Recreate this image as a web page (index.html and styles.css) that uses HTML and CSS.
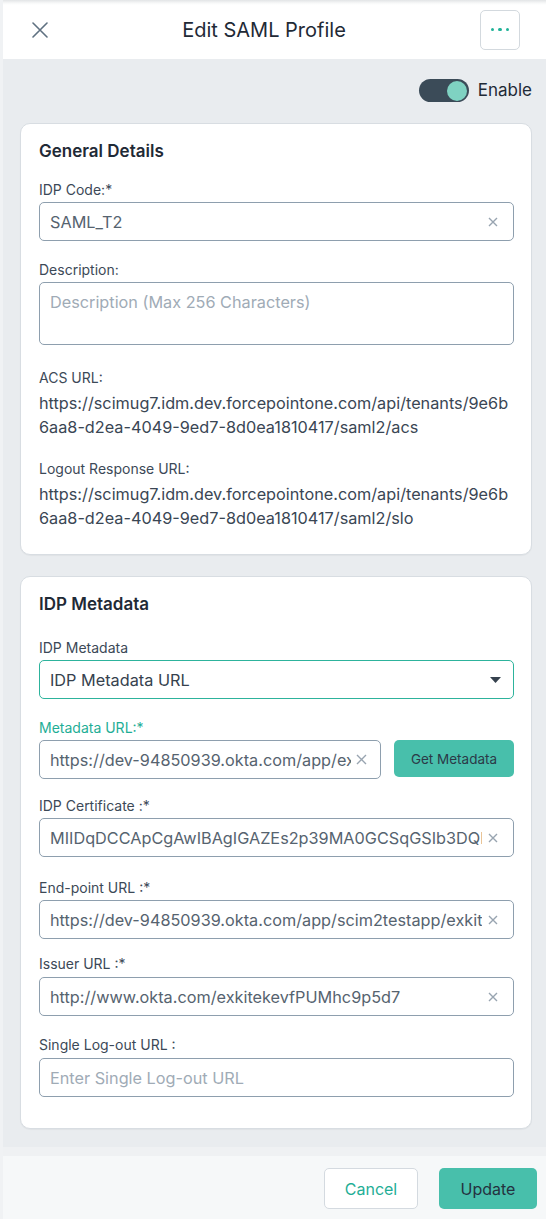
FILE: index.html
```html
<!DOCTYPE html>
<html lang="en">
<head>
<meta charset="utf-8">
<title>Edit SAML Profile</title>
<link rel="stylesheet" href="styles.css">
</head>
<body>
<div class="app">
  <header class="header">
    <button class="icon-btn close-btn" aria-label="Close">
      <svg width="16" height="16" viewBox="0 0 16 16"><path d="M1 1 L15 15 M15 1 L1 15" stroke="#5f7181" stroke-width="1.6" fill="none" stroke-linecap="round"/></svg>
    </button>
    <h1 class="title">Edit SAML Profile</h1>
    <button class="more-btn" aria-label="More">
      <span class="dot"></span><span class="dot"></span><span class="dot"></span>
    </button>
  </header>

  <main class="main">
    <div class="toggle-row">
      <span class="toggle"><span class="knob"></span></span>
      <span class="toggle-label">Enable</span>
    </div>

    <section class="card card-general">
      <h2 class="card-title">General Details</h2>
      <div class="field">
        <label class="label label-first">IDP Code:*</label>
        <div class="input">
          <span class="value">SAML_T2</span>
          <svg class="clear" width="10" height="10" viewBox="0 0 10 10"><path d="M1 1 L9 9 M9 1 L1 9" stroke="#98a4b0" stroke-width="1.4" fill="none"/></svg>
        </div>
      </div>
      <div class="field gap-19">
        <label class="label label-tight">Description:</label>
        <div class="textarea"><span class="placeholder">Description (Max 256 Characters)</span></div>
      </div>
      <div class="info gap-23">
        <div class="label">ACS URL:</div>
        <div class="url">https://scimug7.idm.dev.forcepointone.com/api/tenants/9e6b6aa8-d2ea-4049-9ed7-8d0ea1810417/saml2/acs</div>
      </div>
      <div class="info gap-20">
        <div class="label">Logout Response URL:</div>
        <div class="url">https://scimug7.idm.dev.forcepointone.com/api/tenants/9e6b6aa8-d2ea-4049-9ed7-8d0ea1810417/saml2/slo</div>
      </div>
    </section>

    <section class="card card-metadata">
      <h2 class="card-title title-wide">IDP Metadata</h2>
      <div class="field">
        <label class="label label-tight">IDP Metadata</label>
        <div class="input select">
          <span class="value dark">IDP Metadata URL</span>
          <svg class="caret" width="11" height="6" viewBox="0 0 11 6"><path d="M0 0 H11 L5.5 6 Z" fill="#36424e"/></svg>
        </div>
      </div>
      <div class="field gap-19">
        <label class="label label-tight label-teal">Metadata URL:*</label>
        <div class="url-row">
          <div class="input input-short">
            <span class="value">https://dev-94850939.okta.com/app/exkitekevfPUMhc9p5d7/sso/saml/metadata</span>
            <svg class="clear" width="11" height="11" viewBox="0 0 11 11"><path d="M1 1 L10 10 M10 1 L1 10" stroke="#98a4b0" stroke-width="1.4" fill="none"/></svg>
          </div>
          <button class="btn-meta">Get Metadata</button>
        </div>
      </div>
      <div class="field gap-17">
        <label class="label label-tight">IDP Certificate :*</label>
        <div class="input">
          <span class="value">MIIDqDCCApCgAwIBAgIGAZEs2p39MA0GCSqGSIb3DQEBCwUAMIGUMQswCQYDVQQGEwJVUzET</span>
          <svg class="clear" width="10" height="10" viewBox="0 0 10 10"><path d="M1 1 L9 9 M9 1 L1 9" stroke="#98a4b0" stroke-width="1.4" fill="none"/></svg>
        </div>
      </div>
      <div class="field gap-21">
        <label class="label label-tight">End-point URL :*</label>
        <div class="input">
          <span class="value">https://dev-94850939.okta.com/app/scim2testapp/exkitekevfPUMhc9p5d7/sso/saml</span>
          <svg class="clear" width="10" height="10" viewBox="0 0 10 10"><path d="M1 1 L9 9 M9 1 L1 9" stroke="#98a4b0" stroke-width="1.4" fill="none"/></svg>
        </div>
      </div>
      <div class="field gap-15">
        <label class="label">Issuer URL :*</label>
        <div class="input">
          <span class="value">http://www.okta.com/exkitekevfPUMhc9p5d7</span>
          <svg class="clear" width="10" height="10" viewBox="0 0 10 10"><path d="M1 1 L9 9 M9 1 L1 9" stroke="#98a4b0" stroke-width="1.4" fill="none"/></svg>
        </div>
      </div>
      <div class="field gap-19">
        <label class="label">Single Log-out URL :</label>
        <div class="input">
          <span class="placeholder">Enter Single Log-out URL</span>
        </div>
      </div>
    </section>
  </main>

  <div class="band"></div>
  <footer class="footer">
    <button class="btn btn-cancel">Cancel</button>
    <button class="btn btn-update">Update</button>
  </footer>
</div>
</body>
</html>
```

FILE: styles.css
```css
* { box-sizing: border-box; }

html, body {
  margin: 0;
  padding: 0;
}

body {
  width: 546px;
  height: 1219px;
  overflow: hidden;
  background: #f0f2f4;
  font-family: Inter, "Noto Sans", "Liberation Sans", sans-serif;
  color: #3a4654;
}

.app {
  margin-left: 3px;
  height: 1219px;
  display: flex;
  flex-direction: column;
}

button {
  font-family: inherit;
  cursor: pointer;
}

/* Header */
.header {
  height: 59px;
  flex: none;
  display: flex;
  align-items: center;
  padding: 0 26px 0 17px;
  background: linear-gradient(#e2e4e6 0, #f7f8f8 3px, #ffffff 5px);
}

.icon-btn {
  width: 40px;
  height: 40px;
  border: none;
  background: transparent;
  padding: 0;
  display: flex;
  align-items: center;
  justify-content: center;
}

.title {
  flex: 1;
  margin: 0 12px 0 0;
  text-align: center;
  font-size: 20px;
  font-weight: 400;
  color: #1f2a36;
  line-height: 26px;
}

.more-btn {
  width: 40px;
  height: 40px;
  border: 1px solid #d3d9de;
  border-radius: 5px;
  background: #fff;
  display: flex;
  align-items: center;
  justify-content: center;
  gap: 4px;
  padding: 0;
}

.dot {
  width: 3.5px;
  height: 3.5px;
  border-radius: 50%;
  background: #1fb298;
}

/* Main */
.main {
  flex: none;
  background: #e9ecef;
  padding: 20px 14px 18px 17px;
  display: flex;
  flex-direction: column;
  gap: 21px;
}

.toggle-row {
  height: 23px;
  display: flex;
  justify-content: flex-end;
  align-items: center;
  gap: 9px;
}

.toggle {
  width: 50px;
  height: 23px;
  border-radius: 12px;
  background: #3b4b58;
  display: flex;
  align-items: center;
  justify-content: flex-end;
  padding-right: 2px;
}

.knob {
  width: 20px;
  height: 20px;
  border-radius: 50%;
  background: #7fd2c2;
}

.toggle-label {
  font-size: 17px;
  color: #1f2a36;
  line-height: 23px;
}

/* Cards */
.card {
  background: #fff;
  border: 1px solid #d8dde2;
  border-radius: 10px;
  padding: 16px 17px 24px 18px;
  box-shadow: 0 1px 1px rgba(0, 0, 0, 0.04);
}

.card-metadata {
  padding-bottom: 31px;
}

.card-title {
  margin: 0 0 16px;
  font-size: 17px;
  font-weight: 600;
  line-height: 22px;
  color: #1f2a36;
}

.card-general .card-title {
  margin-bottom: 18px;
}

.title-wide {
  margin-bottom: 23px;
}

.gap-15 { margin-top: 15px; }
.gap-17 { margin-top: 17px; }
.gap-19 { margin-top: 19px; }
.gap-20 { margin-top: 20px; }
.gap-21 { margin-top: 21px; }
.gap-23 { margin-top: 23px; }

.label {
  display: block;
  font-size: 14px;
  line-height: 20px;
  color: #3c4957;
  margin-bottom: 3px;
}

.label-tight {
  margin-bottom: 2px;
}

.label-first {
  margin-bottom: 2px;
}

.label-teal {
  color: #1fae96;
}

.url {
  font-size: 16.25px;
  line-height: 24px;
  color: #3a4654;
  word-break: break-all;
}

.input {
  height: 39px;
  border: 1px solid #8e9fae;
  border-radius: 5px;
  background: #fff;
  display: flex;
  align-items: center;
  padding: 0 15px 0 10px;
  gap: 6px;
  overflow: hidden;
}

.select {
  border-color: #2db39c;
}

.value {
  flex: 1;
  min-width: 0;
  white-space: nowrap;
  overflow: hidden;
  font-size: 16.25px;
  color: #56636f;
}

.value.dark {
  color: #36424e;
}

.placeholder {
  font-size: 16.25px;
  color: #a0abb6;
  white-space: nowrap;
}

.clear {
  flex: none;
}

.caret {
  flex: none;
  margin-right: -3px;
}

.textarea {
  height: 63px;
  border: 1px solid #8e9fae;
  border-radius: 5px;
  padding: 8px 10px;
  line-height: 22px;
}

.url-row {
  display: flex;
  align-items: flex-start;
  gap: 13px;
}

.input-short {
  width: 342px;
  flex: none;
  padding-right: 13px;
  gap: 5px;
}

.btn-meta {
  flex: 1;
  height: 37px;
  border: none;
  border-radius: 5px;
  background: #48bfab;
  color: #2b3a48;
  font-size: 13.5px;
  padding: 0;
}

/* Footer */
.band {
  height: 9px;
  flex: none;
  background: #eff1f3;
}

.footer {
  flex: 1;
  background: #f6f8f9;
  display: flex;
  justify-content: flex-end;
  align-items: flex-start;
  padding: 12px 9px 0 0;
  gap: 21px;
}

.btn {
  height: 41px;
  border-radius: 5px;
  font-size: 16px;
  padding: 0;
}

.btn-cancel {
  width: 94px;
  background: #fff;
  border: 1px solid #d4dae0;
  color: #1fae96;
}

.btn-update {
  width: 98px;
  background: #48bfab;
  border: none;
  color: #24323f;
}
```
